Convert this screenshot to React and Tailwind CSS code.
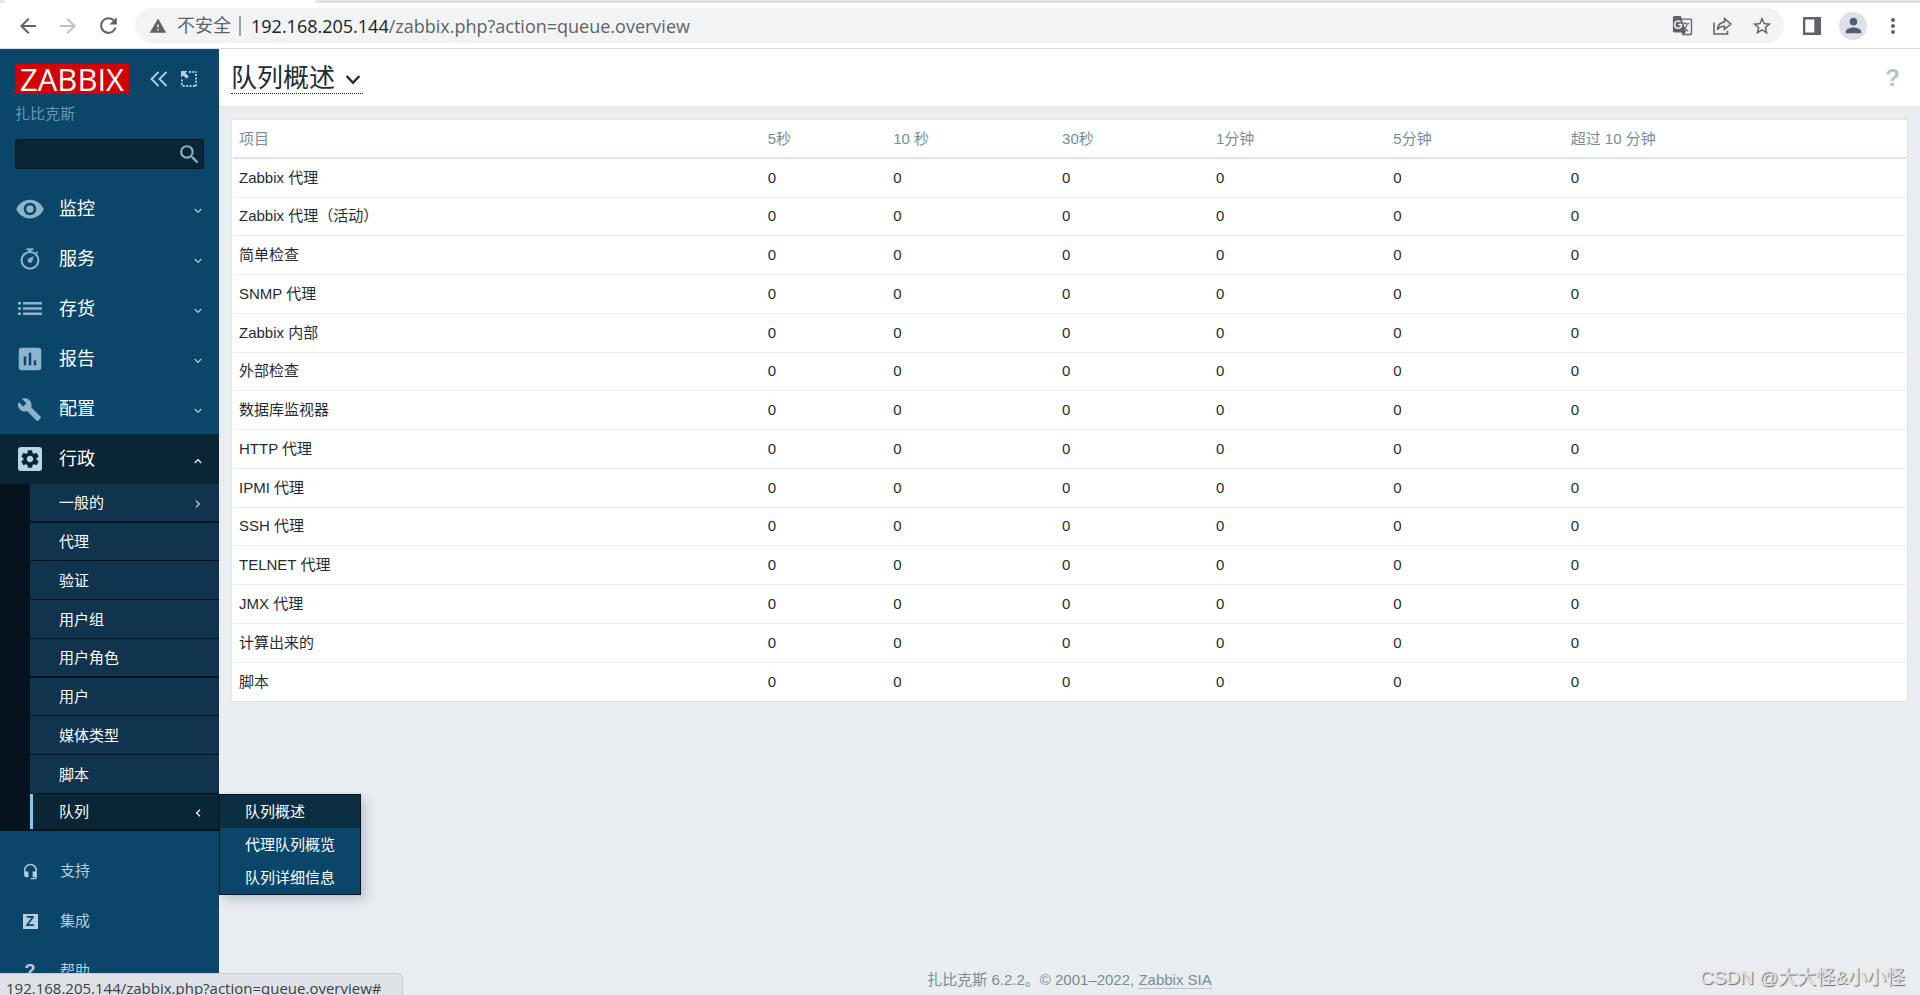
import React from 'react';
import {
  MdArrowBack,
  MdArrowForward,
  MdBuild,
  MdGTranslate,
  MdHeadsetMic,
  MdInsertChart,
  MdMoreVert,
  MdPerson,
  MdRefresh,
  MdRemoveRedEye,
  MdSearch,
  MdSettings,
  MdStarBorder,
  MdWarning,
} from 'react-icons/md';

const columns = ['5秒', '10 秒', '30秒', '1分钟', '5分钟', '超过 10 分钟'];

const rows = [
  'Zabbix 代理',
  'Zabbix 代理（活动）',
  '简单检查',
  'SNMP 代理',
  'Zabbix 内部',
  '外部检查',
  '数据库监视器',
  'HTTP 代理',
  'IPMI 代理',
  'SSH 代理',
  'TELNET 代理',
  'JMX 代理',
  '计算出来的',
  '脚本',
];

const Chevron = ({ className }) => (
  <svg viewBox="0 0 8 6" className={className} fill="none" stroke="currentColor" strokeWidth="1.2">
    <path d="M0.8 1l3.2 3.4L7.2 1" />
  </svg>
);

const StopwatchIcon = () => (
  <svg viewBox="0 0 20 22" className="h-[22px] w-5" fill="none" stroke="currentColor">
    <circle cx="10" cy="12.4" r="8.4" strokeWidth="2.1" />
    <path d="M6.5 1.2h7" strokeWidth="1.8" />
    <path d="M10 1v3" strokeWidth="3" />
    <path d="M15.8 5.6l2-2" strokeWidth="1.5" />
    <path d="M13.8 8l-1.6 5.6a2.4 2.4 0 1 1-3.6-3z" fill="currentColor" stroke="none" />
  </svg>
);

const ListIcon = () => (
  <svg viewBox="0 0 24 14" className="h-[14px] w-6" fill="currentColor">
    <path d="M0 0h3v2.6H0zM5 0h19v2.6H5zM0 5.2h3v2.6H0zM5 5.2h19v2.6H5zM0 10.4h3V13H0zM5 10.4h19V13H5z" />
  </svg>
);

const GearBoxIcon = () => (
  <span className="flex h-6 w-6 items-center justify-center rounded-[3px] bg-[#b8d6ea] text-[#0a2635]">
    <MdSettings size={22} />
  </span>
);

const CollapseIcon = () => (
  <svg viewBox="0 0 18 16" className="h-4 w-[18px]" fill="none" stroke="currentColor" strokeWidth="1.8">
    <path d="M8.5 1L1.5 8l7 7M16.5 1l-7 7 7 7" />
  </svg>
);

const KioskIcon = () => (
  <svg viewBox="0 0 16 16" className="h-4 w-4" fill="none" stroke="currentColor">
    <path d="M8 1h8M15 3v13M14 15H0M1 14V8" strokeWidth="1.8" strokeDasharray="2 1.4" />
    <path d="M0 0h6.5L4.4 2.1l3.4 3.4-2.2 2.2L2.1 4.4 0 6.5z" fill="currentColor" stroke="none" />
  </svg>
);

const ShareIcon = () => (
  <svg viewBox="0 0 19 18" className="h-[18px] w-[19px]" fill="none" stroke="currentColor" strokeWidth="1.5">
    <path d="M1 5.5V17h13.5v-3" />
    <path d="M11.5 1.6L17.8 7l-6.3 5.4V9.2C8 9.2 5.8 10.3 4.3 12.8 4.7 8.5 7.3 5.4 11.5 4.9z" />
  </svg>
);

const PanelIcon = () => (
  <svg viewBox="0 0 18 18" className="h-[18px] w-[18px]" fill="currentColor">
    <path d="M0 0h18v18H0zM2.3 2.6v12.8h9V2.6z" fillRule="evenodd" />
  </svg>
);

const mainMenu = [
  { label: '监控', icon: <MdRemoveRedEye size={30} /> },
  { label: '服务', icon: <StopwatchIcon /> },
  { label: '存货', icon: <ListIcon /> },
  { label: '报告', icon: <MdInsertChart size={30} /> },
  { label: '配置', icon: <MdBuild size={25} /> },
];

const adminMenu = ['一般的', '代理', '验证', '用户组', '用户角色', '用户', '媒体类型', '脚本', '队列'];

const queueMenu = ['队列概述', '代理队列概览', '队列详细信息'];

const supportMenu = [
  { label: '支持', icon: <MdHeadsetMic size={17} /> },
  {
    label: '集成',
    icon: (
      <span className="flex h-[15px] w-[15px] items-center justify-center bg-current">
        <span className="text-[14px] leading-none font-bold text-[#0a466a]">Z</span>
      </span>
    ),
  },
  { label: '帮助', icon: <span className="text-[18px] font-bold">?</span> },
];

const BrowserBar = () => (
  <div className="shrink-0 border-b border-[#dadce0] bg-white font-['Open_Sans','Noto_Sans_CJK_SC',sans-serif] text-[#5f6368]">
    <div className="h-[3px] bg-[#dee1e6]">
      <div className="ml-1 h-[3px] w-[312px] rounded-b-sm bg-white" />
    </div>
    <div className="flex h-[45px] items-center pr-[15px] pl-4">
      <button type="button" aria-label="后退"><MdArrowBack size={24} /></button>
      <button type="button" aria-label="前进" className="ml-4 text-[#bdc1c6]"><MdArrowForward size={24} /></button>
      <button type="button" aria-label="刷新" className="ml-4"><MdRefresh size={25} /></button>
      <div className="ml-[14px] flex h-[35px] flex-1 items-center rounded-full bg-[#f1f3f4] pr-[11px] pl-[14px]">
        <MdWarning size={18} />
        <span className="ml-[10px] text-[18px]">不安全</span>
        <span className="mx-2 h-5 w-[2px] bg-[#9aa0a6]" />
        {/* editable div instead of an input, the host is darker than the path */}
        <div
          role="textbox"
          aria-label="地址栏"
          contentEditable
          suppressContentEditableWarning
          spellCheck={false}
          className="ml-[2px] flex-1 text-[18px] leading-6 outline-none"
        >
          <span className="text-[#202124]">192.168.205.144</span>/zabbix.php?action=queue.overview
        </div>
        <button type="button" aria-label="翻译"><MdGTranslate size={21} /></button>
        <button type="button" aria-label="分享" className="ml-5"><ShareIcon /></button>
        <button type="button" aria-label="收藏" className="ml-[19px]"><MdStarBorder size={22} /></button>
      </div>
      <button type="button" aria-label="侧边栏" className="ml-[19px]"><PanelIcon /></button>
      <button
        type="button"
        aria-label="用户"
        className="ml-[18px] flex h-7 w-7 items-center justify-center rounded-full bg-[#dee1e6] text-[#505f79]"
      >
        <MdPerson size={23} />
      </button>
      <button type="button" aria-label="更多" className="ml-[14px]"><MdMoreVert size={24} /></button>
    </div>
  </div>
);

const Sidebar = () => (
  <aside className="w-[219px] shrink-0 bg-[#0a466a] text-[15px] text-white">
    <div className="flex items-center pt-[15px] pl-[15px] text-[#b5cfdf]">
      <a
        href="#"
        className="flex h-[30px] w-[114px] items-center justify-center bg-[#d40000] font-['Open_Sans',sans-serif] text-[31px] leading-none text-white"
      >
        ZABBIX
      </a>
      <button type="button" aria-label="折叠" className="ml-[21px]"><CollapseIcon /></button>
      <button type="button" aria-label="隐藏侧边栏" className="ml-[13px]"><KioskIcon /></button>
    </div>
    <div className="mt-[10px] pl-[15px] leading-5 text-[#6f94aa]">扎比克斯</div>
    <form className="mx-[15px] mt-[15px] flex h-[30px] items-center rounded-[3px] border border-[#04131c] bg-[#0a2635]">
      <input type="text" aria-label="搜索" className="h-full min-w-0 flex-1 bg-transparent px-2 outline-none" />
      <button type="button" aria-label="提交搜索" className="pr-px text-[#8fb3ca]"><MdSearch size={25} /></button>
    </form>

    <nav className="mt-[15px]">
      <ul>
        {mainMenu.map((item) => (
          <li key={item.label}>
            <a href="#" className="flex h-[50px] items-center pr-[17px] text-[18px]">
              <span className="flex w-[59px] shrink-0 justify-center text-[#8fb3ca]">
                <span className="flex w-8 justify-center">{item.icon}</span>
              </span>
              <span className="flex-1">{item.label}</span>
              <Chevron className="mt-1 h-[6px] w-2 text-[#b5cfdf]" />
            </a>
          </li>
        ))}
        <li>
          <a href="#" className="flex h-[50px] items-center bg-[#0a2635] pr-[17px] text-[18px]">
            <span className="flex w-[59px] shrink-0 justify-center"><GearBoxIcon /></span>
            <span className="flex-1">行政</span>
            <Chevron className="mt-1 h-[6px] w-2 rotate-180" />
          </a>
          <ul className="bg-[#04131c] pl-[30px]">
            {adminMenu.map((label) => {
              const active = label === '队列';
              return (
                <li
                  key={label}
                  className="relative h-[39px] border-b border-[#04131c] bg-[#10344d] nth-[4n+1]:border-b-2 nth-[4n+2]:h-[38px] last:h-[37px] last:border-b-0"
                >
                  <a
                    href="#"
                    className={`flex h-full items-center pt-[2px] pr-[17px] ${active ? 'border-l-[3px] border-[#80c8ff] bg-[#0a2635] pl-[26px]' : 'pl-[29px]'}`}
                  >
                    <span className="flex-1">{label}</span>
                    {label === '一般的' && <Chevron className="h-[6px] w-2 -rotate-90 text-[#b5cfdf]" />}
                    {active && <Chevron className="h-[6px] w-2 rotate-90" />}
                  </a>
                  {active && (
                    <ul className="absolute top-0 left-full z-10 border border-[#04131c] bg-[#0a466a] whitespace-nowrap shadow-[5px_5px_10px_rgba(60,80,110,0.25)]">
                      {queueMenu.map((entry) => (
                        <li key={entry} className="first:bg-[#0c2e43]">
                          <a href="#" className="block pr-[25px] pl-[25px] leading-[33px]">{entry}</a>
                        </li>
                      ))}
                    </ul>
                  )}
                </li>
              );
            })}
          </ul>
        </li>
      </ul>
      <ul className="mt-[15px] text-[#b5cfdf]">
        {supportMenu.map((item) => (
          <li key={item.label}>
            <a href="#" className="flex h-[50px] items-center">
              <span className="flex w-[60px] shrink-0 justify-center">{item.icon}</span>
              {item.label}
            </a>
          </li>
        ))}
      </ul>
    </nav>
  </aside>
);

const QueueTable = () => (
  <div className="mx-3 mt-3 border border-[#dfe4e7] bg-white px-px">
    <table className="w-full table-fixed border-separate border-spacing-0 text-left">
      <colgroup>
        <col className="w-[31.6%]" />
        <col className="w-[7.5%]" />
        <col className="w-[10.1%]" />
        <col className="w-[9.2%]" />
        <col className="w-[10.6%]" />
        <col className="w-[10.6%]" />
        <col />
      </colgroup>
      <thead>
        <tr className="h-[39px] text-[#768d99]">
          <th className="border-b-2 border-[#dce2e5] px-[6px] pt-[2px] font-normal">项目</th>
          {columns.map((column) => (
            <th key={column} className="border-b-2 border-[#dce2e5] px-[6px] pt-[2px] font-normal">{column}</th>
          ))}
        </tr>
      </thead>
      <tbody>
        {rows.map((row) => (
          <tr key={row} className="group h-[39px] nth-[4n+2]:h-[38px] last:h-[37px]">
            <td className="border-b border-[#ebeef0] px-[6px] group-last:border-b-0">{row}</td>
            {columns.map((column) => (
              <td key={column} className="border-b border-[#ebeef0] px-[6px] group-last:border-b-0">0</td>
            ))}
          </tr>
        ))}
      </tbody>
    </table>
  </div>
);

export default function App() {
  return (
    <div className="relative flex h-screen flex-col overflow-hidden font-['Liberation_Sans','Noto_Sans_CJK_SC',sans-serif]">
      <BrowserBar />
      <div className="flex min-h-0 flex-1">
        <Sidebar />
        <main className="flex min-w-0 flex-1 flex-col bg-[#e9edf0] text-[15px] text-[#1f2c33]">
          <header className="flex h-[58px] shrink-0 items-center justify-between border-b border-[#dfe4e7] bg-white pr-5 pl-3">
            <h1>
              <button
                type="button"
                className="flex items-center border-b border-dotted border-[#1f2c33] pt-px pr-[2px] text-[26px] leading-[30px]"
              >
                队列概述
                <Chevron className="mt-[5px] ml-[10px] h-3 w-4" />
              </button>
            </h1>
            <a href="#" aria-label="帮助" className="text-[24px] leading-7 font-bold text-[#b4c3cb]">?</a>
          </header>
          <QueueTable />
          <footer className="mt-auto pb-1 text-center leading-[22px] text-[#768d99]">
            扎比克斯 6.2.2。© 2001–2022,{' '}
            <a href="#" className="border-b border-[#b4c3cb]">Zabbix SIA</a>
          </footer>
        </main>
      </div>
      <div className="absolute bottom-0 left-0 z-20 h-[22px] w-[403px] overflow-hidden rounded-tr-md border-t border-r border-[#c8ccd0] bg-[#dee1e6] pl-[6px] font-['Open_Sans',sans-serif] text-[15px] leading-[28px] text-[#3c4043]">
        192.168.205.144/zabbix.php?action=queue.overview#
      </div>
      <div className="absolute right-[15px] bottom-1 z-20 text-[19px] leading-[26px] text-[#e4e6e8] [text-shadow:1px_1px_1px_#666]">
        CSDN @大大怪&小小怪
      </div>
    </div>
  );
}
